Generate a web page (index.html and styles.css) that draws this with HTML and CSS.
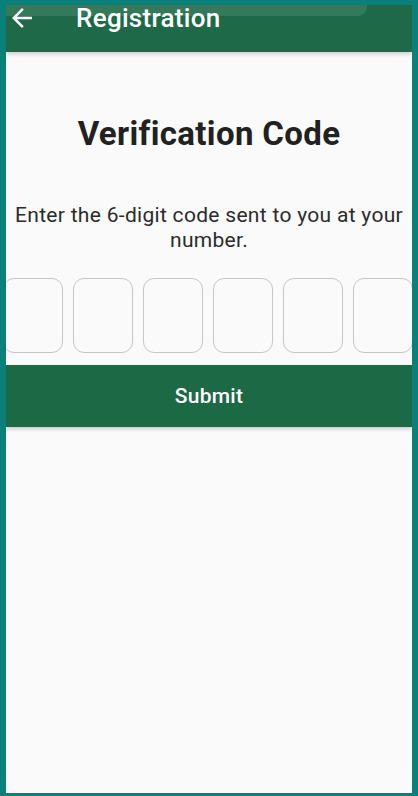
FILE: index.html
```html
<!DOCTYPE html>
<html lang="en">
<head>
<meta charset="utf-8">
<title>Registration</title>
<link rel="stylesheet" href="styles.css">
</head>
<body>
<div class="frame">
  <header class="appbar">
    <svg class="back" width="20" height="20" viewBox="4 4 16 16" aria-hidden="true"><path fill="#fff" d="M20 11H7.83l5.59-5.59L12 4l-8 8 8 8 1.41-1.41L7.83 13H20v-2z"/></svg>
    <h1 class="title">Registration</h1>
    <div class="glare"></div>
  </header>
  <main class="content">
    <h2 class="heading">Verification Code</h2>
    <p class="subtitle">Enter the 6-digit code sent to you at your number.</p>
    <div class="codes">
      <div class="box"></div>
      <div class="box"></div>
      <div class="box"></div>
      <div class="box"></div>
      <div class="box"></div>
      <div class="box"></div>
    </div>
    <button class="submit" type="button">Submit</button>
  </main>
</div>
</body>
</html>
```
FILE: styles.css
```css
html, body {
  margin: 0;
  padding: 0;
  background: #0b7f7a;
}
.frame {
  box-sizing: border-box;
  width: 418px;
  height: 796px;
  border-style: solid;
  border-color: #0b7f7a;
  border-width: 5px 6px 3px 6px;
  background: #fafafa;
  font-family: Roboto, "Noto Sans", sans-serif;
  overflow: hidden;
  display: flex;
  flex-direction: column;
}
.appbar {
  position: relative;
  height: 47px;
  flex: none;
  background: #1e6a48;
  display: flex;
  align-items: flex-start;
  box-shadow: 0 2px 4px rgba(0,0,0,0.18);
  z-index: 1;
}
.back {
  margin: 3px 0 0 6px;
  flex: none;
}
.title {
  margin: 0 0 0 44px;
  color: #fff;
  font-size: 26px;
  font-weight: 500;
  line-height: 26px;
  letter-spacing: 0.3px;
}
.glare {
  position: absolute;
  left: 0;
  top: 0;
  width: 361px;
  height: 11px;
  background: rgba(255,255,255,0.1);
  border-bottom-right-radius: 9px;
}
.content {
  display: flex;
  flex-direction: column;
  align-items: center;
  padding-top: 62px;
}
.heading {
  margin: 0;
  font-size: 33px;
  line-height: 40px;
  font-weight: 700;
  color: #212121;
  letter-spacing: 0.35px;
}
.subtitle {
  margin: 49px 4px 0;
  font-size: 21px;
  line-height: 25px;
  color: #2b2b2b;
  text-align: center;
  letter-spacing: 0.3px;
}
.codes {
  box-sizing: border-box;
  margin-top: 25px;
  width: 100%;
  padding-right: 2px;
  display: flex;
  justify-content: center;
  gap: 10px;
  overflow: hidden;
}
.box {
  flex: none;
  box-sizing: border-box;
  width: 60px;
  height: 75px;
  border: 1.5px solid #c6c6c6;
  border-radius: 11px;
  background: #fafafa;
}
.submit {
  margin-top: 12px;
  width: 100%;
  height: 62px;
  border: 0;
  background: #1c6946;
  color: #fff;
  font-family: Roboto, "Noto Sans", sans-serif;
  font-size: 21px;
  font-weight: 500;
  letter-spacing: 0.3px;
  box-shadow: 0 2px 4px rgba(0,0,0,0.2);
  cursor: pointer;
}
```
